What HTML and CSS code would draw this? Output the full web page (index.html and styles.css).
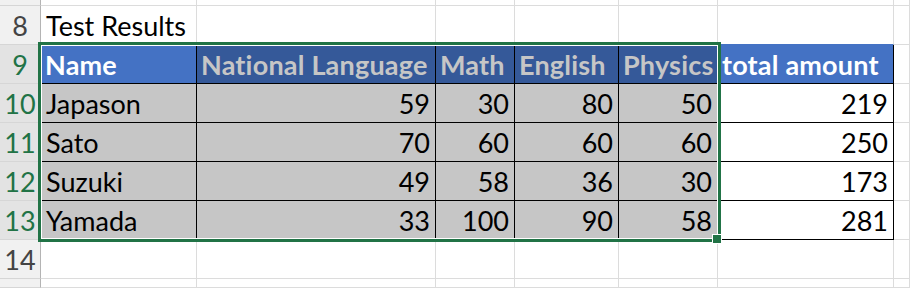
FILE: index.html
```html
<!DOCTYPE html>
<html>
<head>
<meta charset="utf-8">
<link rel="stylesheet" href="styles.css">
</head>
<body>
<div class="sheet">
  <div class="grid">
    <!-- row 7 (partial) -->
    <div class="rh"></div><div class="c"></div><div class="c"></div><div class="c"></div><div class="c"></div><div class="c"></div><div class="c"></div><div class="c"></div>
    <!-- row 8 -->
    <div class="rh">8</div><div class="c title">Test Results</div><div class="c"></div><div class="c"></div><div class="c"></div><div class="c"></div><div class="c above-hd"></div><div class="c"></div>
    <!-- row 9 -->
    <div class="rh sel">9</div>
    <div class="c hd">Name</div>
    <div class="c hd s">National Language</div>
    <div class="c hd s">Math</div>
    <div class="c hd s">English</div>
    <div class="c hd s">Physics</div>
    <div class="c hd">total amount</div>
    <div class="c"></div>
    <!-- row 10 -->
    <div class="rh sel">10</div>
    <div class="c d s">Japason</div>
    <div class="c d s num">59</div>
    <div class="c d s num">30</div>
    <div class="c d s num">80</div>
    <div class="c d s num">50</div>
    <div class="c d num">219</div>
    <div class="c"></div>
    <!-- row 11 -->
    <div class="rh sel">11</div>
    <div class="c d s">Sato</div>
    <div class="c d s num">70</div>
    <div class="c d s num">60</div>
    <div class="c d s num">60</div>
    <div class="c d s num">60</div>
    <div class="c d num">250</div>
    <div class="c"></div>
    <!-- row 12 -->
    <div class="rh sel">12</div>
    <div class="c d s">Suzuki</div>
    <div class="c d s num">49</div>
    <div class="c d s num">58</div>
    <div class="c d s num">36</div>
    <div class="c d s num">30</div>
    <div class="c d num">173</div>
    <div class="c"></div>
    <!-- row 13 -->
    <div class="rh sel">13</div>
    <div class="c d s">Yamada</div>
    <div class="c d s num">33</div>
    <div class="c d s num">100</div>
    <div class="c d s num">90</div>
    <div class="c d s num">58</div>
    <div class="c d num">281</div>
    <div class="c"></div>
    <!-- row 14 -->
    <div class="rh">14</div><div class="c"></div><div class="c"></div><div class="c"></div><div class="c"></div><div class="c"></div><div class="c"></div><div class="c"></div>
    <!-- row 15 (partial) -->
    <div class="rh"></div><div class="c"></div><div class="c"></div><div class="c"></div><div class="c"></div><div class="c"></div><div class="c"></div><div class="c"></div>
  </div>
  <div class="selection"></div>
  <div class="fill-handle"></div>
</div>
</body>
</html>
```

FILE: styles.css
```css
html, body {
  margin: 0;
  padding: 0;
  background: #ffffff;
}

.sheet {
  position: relative;
  width: 910px;
  height: 288px;
  overflow: hidden;
  font-family: Lato, "Liberation Sans", sans-serif;
  font-size: 27px;
  color: #000000;
}

.grid {
  display: grid;
  grid-template-columns: 41px 156px 239px 79px 104px 99px 176px 1fr;
  grid-template-rows: 6px repeat(7, 39px) 1fr;
  height: 288px;
}

.grid > div {
  box-sizing: border-box;
  display: flex;
  align-items: center;
  white-space: nowrap;
  overflow: hidden;
}

.rh {
  background: #f1f1f1;
  border-right: 1px solid #b4b4b4;
  border-bottom: 1px solid #d6d6d6;
  justify-content: center;
  color: #444444;
}

.rh.sel {
  background: #e3e3e3;
  color: #217346;
}

.c {
  border-right: 1px solid #dcdcdc;
  border-bottom: 1px solid #dcdcdc;
  padding: 0 5px;
}

.title {
  overflow: visible;
}

.above-hd {
  border-bottom-color: #4472c4;
}

.hd {
  background: #4472c4;
  color: #ffffff;
  font-weight: 700;
  letter-spacing: 0.2px;
  border-right-color: #000000;
  border-bottom-color: #000000;
  padding-left: 4px;
}

.hd.s {
  background: #355999;
  color: #c6c6c6;
}

.d {
  border-right-color: #000000;
  border-bottom-color: #000000;
}

.d.s {
  background: #c6c6c6;
}

.num {
  justify-content: flex-end;
}

.selection {
  position: absolute;
  left: 38px;
  top: 42px;
  width: 683px;
  height: 200px;
  box-sizing: border-box;
  border: 3px solid #217346;
  box-shadow: inset 0 0 0 1px #ffffff;
  pointer-events: none;
}

.fill-handle {
  position: absolute;
  left: 712px;
  top: 234px;
  width: 8px;
  height: 8px;
  background: #217346;
  border: 1px solid #ffffff;
}
```
